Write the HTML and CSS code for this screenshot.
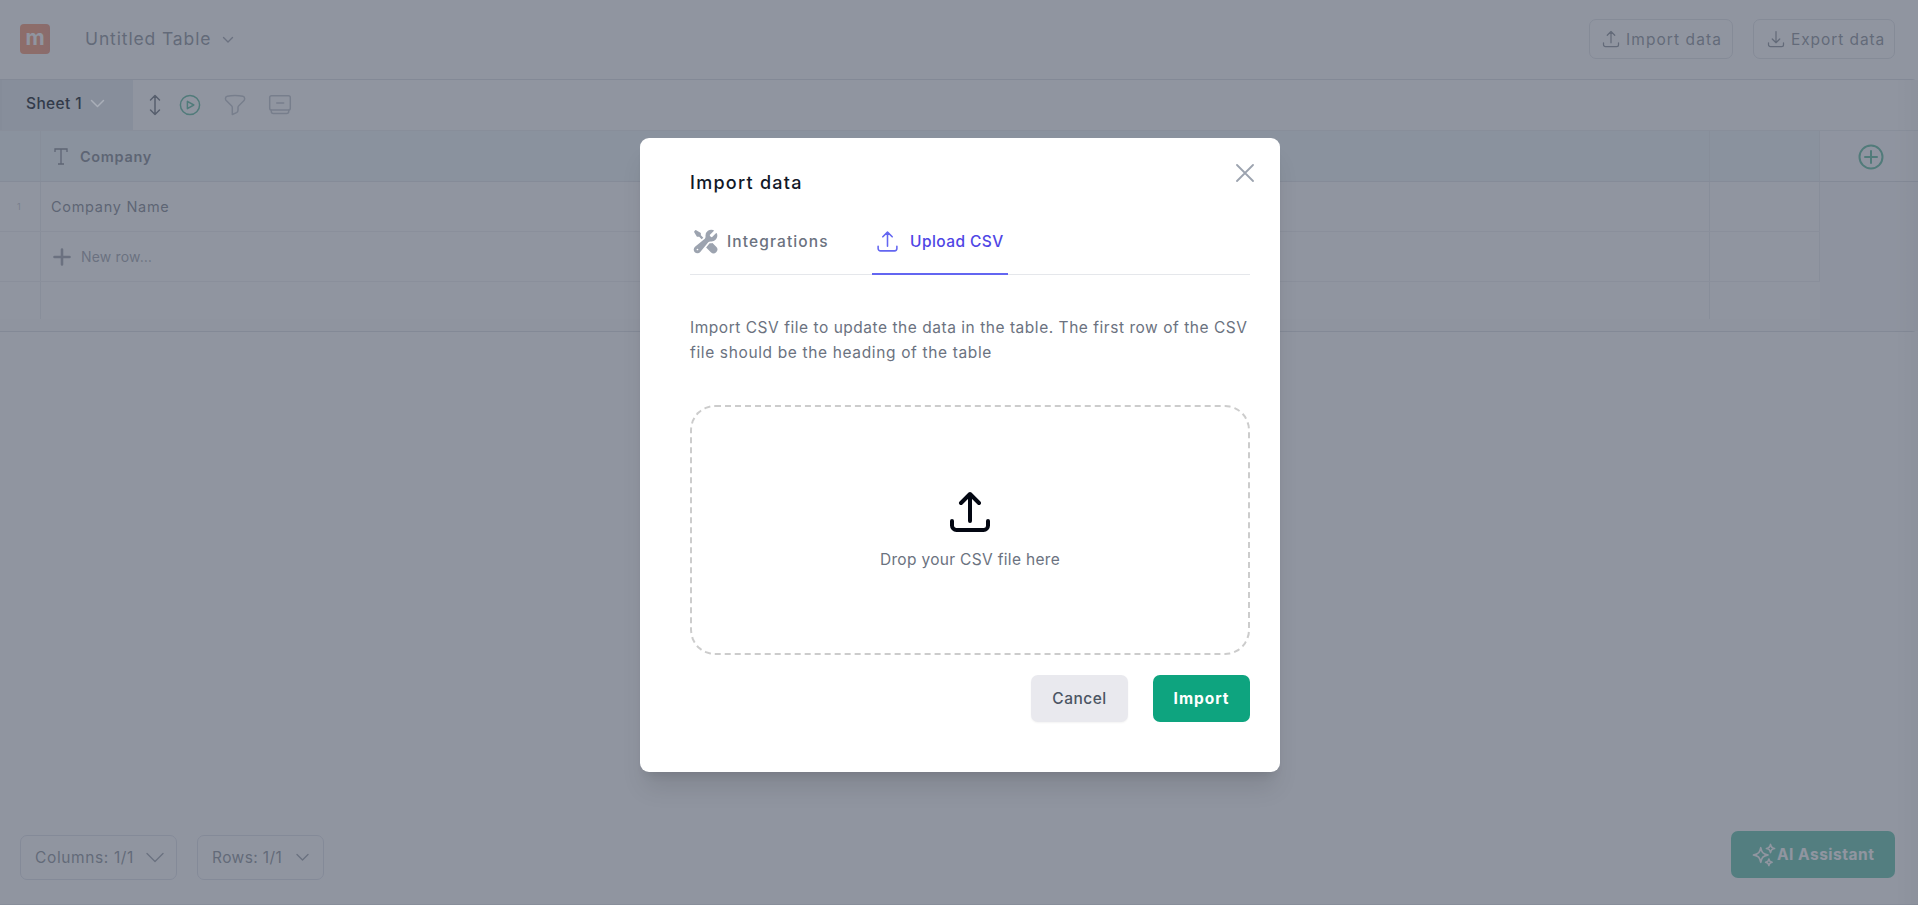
FILE: index.html
```html
<!DOCTYPE html>
<html lang="en">
<head>
<meta charset="utf-8">
<title>Untitled Table</title>
<link rel="stylesheet" href="styles.css">
</head>
<body>
<div class="app">
  <header class="topbar">
    <div class="logo">m</div>
    <div class="doc-name">Untitled Table</div>
    <svg class="doc-chevron" width="12" height="8" viewBox="0 0 12 8"><path d="M1.5 1.5 6 6l4.500-4.500"/></svg>
    <div class="top-actions">
      <button class="outline-btn import-top">
        <svg class="icon" width="20" height="20" viewBox="0 0 24 24"><path d="M3 16.500v2.250A2.250 2.250 0 0 0 5.250 21h13.500A2.250 2.250 0 0 0 21 18.750V16.500m-13.500-9L12 3m0 0 4.500 4.500M12 3v13.500"/></svg>
        <span>Import data</span>
      </button>
      <button class="outline-btn export-top">
        <svg class="icon" width="20" height="20" viewBox="0 0 24 24"><path d="M3 16.500v2.250A2.250 2.250 0 0 0 5.250 21h13.500A2.250 2.250 0 0 0 21 18.750V16.500M16.500 12 12 16.500m0 0L7.500 12m4.500 4.500V3"/></svg>
        <span>Export data</span>
      </button>
    </div>
  </header>

  <main class="panel">
    <div class="toolbar">
      <div class="sheet-tab"><span>Sheet 1</span>
        <svg width="15" height="10" viewBox="0 0 15 10"><path d="M1.500 1.500l6 6 6-6"/></svg>
      </div>
      <div class="tools">
        <svg class="t-sort" width="12" height="22" viewBox="0 0 12 22"><path d="M6 1.500v19M1.500 6 6 1.500 10.500 6M1.500 16 6 20.500l4.500-4.500"/></svg>
        <svg class="t-run" width="22" height="22" viewBox="0 0 22 22"><circle cx="11" cy="11" r="9.600"/><path d="M8.400 7.300v7.400l6.400-3.700z"/></svg>
        <svg class="t-filter" width="22" height="22" viewBox="0 0 22 22"><path d="M11 1.600c2.700 0 5.300.2 7.900.7.900.2 1.700 1 1.700 1.900v.8c0 .7-.3 1.300-.8 1.800l-5 5c-.5.500-.8 1.100-.8 1.800v2.700c0 1-.5 1.800-1.400 2.300L8.300 20.500v-6.900c0-.7-.3-1.300-.8-1.800l-5-5c-.700-.500-1-1.100-1-1.800v-.8c0-.9.800-1.700 1.700-1.900 2.500-.500 5.100-.700 7.800-.700z"/></svg>
        <svg class="t-box" width="24" height="22" viewBox="0 0 24 22"><rect x="1.700" y="1.700" width="20.600" height="14.300" rx="1.800"/><path d="M8.700 9h7M3.300 16.300v1.200c0 1.200.8 2 2 2h13.400c1.200 0 2-.8 2-2v-1.200"/></svg>
      </div>
    </div>

    <div class="sheet">
      <div class="grid">
        <div class="row head">
          <div class="cell num"></div>
          <div class="cell main">
            <svg class="type" width="14" height="17" viewBox="0 0 14 17"><path d="M1 4V1h12v3M7 1v15M4 16h6"/></svg>
            <span class="company">Company</span>
          </div>
          <div class="cell extra"></div>
        </div>
        <div class="row">
          <div class="cell num">1</div>
          <div class="cell main value"><span>Company Name</span></div>
          <div class="cell extra"></div>
        </div>
        <div class="row">
          <div class="cell num"></div>
          <div class="cell main new">
            <svg width="18" height="18" viewBox="0 0 18 18"><path d="M9 1.500v15M1.500 9h15"/></svg>
            <span>New row…</span>
          </div>
          <div class="cell extra"></div>
        </div>
        <div class="row last">
          <div class="cell num"></div>
          <div class="cell main"></div>
          <div class="cell extra"></div>
        </div>
      </div>
      <div class="side">
        <div class="add-col">
          <svg width="26" height="26" viewBox="0 0 26 26"><circle cx="13" cy="13" r="11.500"/><path d="M13 7v12M7 13h12"/></svg>
        </div>
      </div>
    </div>
  </main>

  <footer class="bottombar">
    <button class="outline-btn count cols"><span>Columns: 1/1</span>
      <svg width="18" height="11" viewBox="0 0 18 11"><path d="M1 1.500l8 8 8-8"/></svg></button>
    <button class="outline-btn count rows"><span>Rows: 1/1</span>
      <svg width="13" height="9" viewBox="0 0 13 9"><path d="M1 1.500l5.500 5.500L12 1.500"/></svg></button>
    <button class="ai-btn">
      <svg class="icon" width="26" height="26" viewBox="0 0 24 24"><path d="M9.813 15.904 9 18.750l-.813-2.846a4.500 4.500 0 0 0-3.090-3.090L2.250 12l2.846-.813a4.500 4.500 0 0 0 3.090-3.090L9 5.250l.813 2.846a4.500 4.500 0 0 0 3.090 3.090L15.750 12l-2.846.813a4.500 4.500 0 0 0-3.090 3.090ZM18.259 8.715 18 9.750l-.259-1.035a3.375 3.375 0 0 0-2.455-2.456L14.250 6l1.036-.259a3.375 3.375 0 0 0 2.455-2.456L18 2.250l.259 1.035a3.375 3.375 0 0 0 2.456 2.456L21.750 6l-1.035.259a3.375 3.375 0 0 0-2.456 2.456ZM16.894 20.567 16.500 21.750l-.394-1.183a2.250 2.250 0 0 0-1.423-1.423L13.500 18.750l1.183-.394a2.250 2.250 0 0 0 1.423-1.423l.394-1.183.394 1.183a2.250 2.250 0 0 0 1.423 1.423l1.183.394-1.183.394a2.250 2.250 0 0 0-1.423 1.423Z"/></svg>
      <span>AI Assistant</span>
    </button>
  </footer>
</div>

<div class="overlay">
  <section class="modal">
    <button class="close"><svg width="18" height="18" viewBox="0 0 18 18"><path d="M1 1l16 16M17 1 1 17"/></svg></button>
    <h2>Import data</h2>
    <nav class="tabs">
      <div class="tab">
        <svg class="wrench" width="27" height="27" viewBox="0 0 24 24"><path fill-rule="evenodd" d="M12 6.750a5.250 5.250 0 0 1 6.775-5.025.75.75 0 0 1 .313 1.248l-3.320 3.319c.063.475.276.934.641 1.299.365.365.824.578 1.300.640l3.318-3.319a.75.75 0 0 1 1.248.313 5.250 5.250 0 0 1-5.472 6.756c-1.018-.086-1.870.100-2.309.634L7.344 21.300A3.298 3.298 0 1 1 2.700 16.657l8.684-7.151c.533-.440.720-1.291.634-2.309A5.342 5.342 0 0 1 12 6.750ZM4.117 19.125a.75.75 0 0 1 .75-.75h.008a.75.75 0 0 1 .75.75v.008a.75.75 0 0 1-.75.75h-.008a.75.75 0 0 1-.75-.75v-.008Z"/><path d="m10.076 8.640-2.201-2.200V4.874a.75.75 0 0 0-.364-.643l-3.750-2.250a.75.75 0 0 0-.916.113l-.75.75a.75.75 0 0 0-.113.916l2.250 3.750a.75.75 0 0 0 .643.364h1.564l2.062 2.062 1.575-1.297Z"/><path d="m12.556 17.329 4.183 4.182a3.375 3.375 0 0 0 4.773-4.773l-3.306-3.305a6.803 6.803 0 0 1-1.530.043c-.394-.034-.682-.006-.867.042a.589.589 0 0 0-.167.063l-3.086 3.748Z"/></svg>
        <span class="t-int">Integrations</span>
      </div>
      <div class="tab active">
        <svg class="icon" width="25" height="25" viewBox="0 0 24 24"><path d="M3 16.500v2.250A2.250 2.250 0 0 0 5.250 21h13.500A2.250 2.250 0 0 0 21 18.750V16.500m-13.500-9L12 3m0 0 4.500 4.500M12 3v13.500"/></svg>
        <span class="t-csv">Upload CSV</span>
      </div>
    </nav>
    <p class="intro"><span class="l1">Import CSV file to update the data in the table. The first row of the CSV</span><br><span class="l2">file should be the heading of the table</span></p>
    <div class="drop">
      <svg class="icon" width="48" height="48" viewBox="0 0 24 24"><path d="M3 16.500v2.250A2.250 2.250 0 0 0 5.250 21h13.500A2.250 2.250 0 0 0 21 18.750V16.500m-13.500-9L12 3m0 0 4.500 4.500M12 3v13.500"/></svg>
      <span>Drop your CSV file here</span>
    </div>
    <div class="actions">
      <button class="cancel">Cancel</button>
      <button class="confirm">Import</button>
    </div>
  </section>
</div>
</body>
</html>
```
FILE: styles.css
```css
* { box-sizing: border-box; }
body {
  margin: 0;
  width: 1918px;
  height: 905px;
  overflow: hidden;
  font-family: Inter, Roboto, "Liberation Sans", sans-serif;
  font-size: 15.5px;
  background: #fff;
}
button { margin: 0; padding: 0; border: 0; background: none; font: inherit; color: inherit; }
svg { display: block; flex: none; fill: none; stroke: currentColor; stroke-width: 1.5; stroke-linecap: round; stroke-linejoin: round; }
span { white-space: nowrap; }

.app { display: flex; flex-direction: column; height: 905px; border-bottom: 1px solid #e0e3e8; }
/* Shade of the closed drawer at the right edge */
.app::after { content: ""; position: absolute; top: 80px; right: 0; width: 24px; height: 825px; background: linear-gradient(90deg, transparent, rgba(0, 0, 0, .06)); }

/* Top bar */
.topbar { display: flex; align-items: center; height: 79px; padding: 0 23px 1px 20px; flex: none; }
.logo {
  display: flex; align-items: center; justify-content: center;
  width: 30px; height: 30px; border-radius: 4px;
  background: linear-gradient(90deg, #f3602b 55%, #e35a33);
  color: #fff; font: 700 21px/24px Inter, sans-serif; padding-bottom: 3px;
}
.doc-name { margin-left: 35px; width: 126px; font-size: 17.5px; line-height: 24px; letter-spacing: .87px; color: #4b5563; white-space: nowrap; }
.doc-chevron { margin-left: 11px; margin-top: 1px; color: #6b7280; stroke-width: 1.4; }
.top-actions { display: flex; gap: 20px; margin-left: auto; }
.outline-btn { display: flex; align-items: center; border: 1px solid #d1d5db; border-radius: 7px; color: #4b5563; }
.import-top { width: 144px; height: 40px; padding-left: 11px; gap: 5px; letter-spacing: 1.08px; }
.export-top { width: 142px; height: 40px; padding-left: 12px; gap: 5px; letter-spacing: .92px; }

/* Sheet panel */
.panel { height: 253px; border: 1px solid #c9cdd5; border-left: 0; border-right: 0; border-top-right-radius: 6px; border-bottom-right-radius: 6px; background: #f9fafb; flex: none; }
.toolbar { display: flex; height: 51px; border-bottom: 1px solid #dfe3e7; background: #fff; }
.sheet-tab { display: flex; align-items: center; gap: 8px; width: 133px; padding: 0 0 4px 24px; background: #dbe4ea; border-left: 2px solid #d4dce3; font-weight: 500; letter-spacing: .37px; color: #333b4a; }
.sheet-tab span { position: relative; z-index: 2; width: 56px; }
.sheet-tab svg { position: relative; z-index: 2; margin-top: 2px; color: #a9aeb8; }
.tools { display: flex; align-items: center; padding-left: 16px; }
.t-sort { color: #1f2937; }
.t-run { margin-left: 18px; color: #059669; }
.t-filter { margin-left: 23px; color: #9ca3af; }
.t-box { margin-left: 22px; color: #9ca3af; }

.sheet { display: flex; height: 200px; }
.grid { width: 1820px; }
.row { display: flex; height: 50px; border-bottom: 1px solid #e5e7eb; background: #fff; }
.row.head { height: 51px; border-bottom-color: #d2d7dd; background: #e8f1f5; }
.row.head .cell { border-right-color: #d9e1e7; }
.row.last { height: 37px; border-bottom: 0; }
.cell { display: flex; align-items: center; border-right: 1px solid #dfe3e7; }
.row.last .extra { border-right-color: transparent; }
.num { width: 41px; padding: 0 0 0 17px; font-size: 9px; color: #9ca3af; }
.main { width: 1670px; }
.extra { width: 110px; }
.type { margin-left: 13px; color: #374151; stroke-width: 1.3; stroke-linecap: butt; stroke-linejoin: miter; }
.company { margin-left: 12px; font-size: 14.5px; font-weight: 600; letter-spacing: .68px; color: #374151; }
.value { padding-left: 10px; font-size: 14.5px; letter-spacing: .71px; color: #374151; }
.new { padding-left: 12px; gap: 10px; font-size: 14px; letter-spacing: .17px; color: #6b7280; }
.new svg { stroke-width: 2.6; }
.side { flex: 1; background: #f8f8fa; }
.add-col { display: flex; align-items: center; height: 51px; padding: 0 0 0 38px; border-bottom: 1px solid #c9cdd5; background: #fcfcfd; color: #059669; }
.add-col svg { stroke-width: 2; margin-top: 1px; }

/* Bottom bar */
.bottombar { display: flex; align-items: flex-end; margin-top: auto; padding: 0 23px 24px 20px; }
.count { height: 45px; border-color: #cfd2e0; }
.cols { width: 157px; padding-left: 14px; gap: 12px; letter-spacing: .62px; }
.cols span { width: 99px; }
.rows { width: 127px; padding-left: 14px; margin-left: 20px; gap: 14px; letter-spacing: .4px; }
.rows span { width: 70px; }
.count svg { color: #6b7280; stroke-width: 1.4; }
.ai-btn { display: flex; align-items: center; width: 164px; height: 47px; margin: 0 0 2px auto; padding-left: 20px; border-radius: 7px; background: #0ea47f; color: #fff; font-weight: 700; letter-spacing: .5px; }

/* Modal */
.overlay { position: absolute; top: 0; left: 0; width: 1918px; height: 905px; padding-top: 138px; background: rgba(107, 114, 128, .75); }
.modal {
  position: relative; width: 640px; height: 634px; margin: 0 0 0 640px; padding: 31px 30px 0 50px;
  border-radius: 9px; background: #fff;
  box-shadow: 0 20px 25px -5px rgba(0, 0, 0, .1), 0 8px 10px -6px rgba(0, 0, 0, .1);
}
.close { position: absolute; top: 26px; right: 26px; color: #9ca3af; }
.close svg { stroke-width: 1.8; }
h2 { margin: 0; font-size: 18px; line-height: 28px; font-weight: 500; letter-spacing: 1.26px; color: #111827; }
.tabs { display: flex; gap: 42px; height: 78px; border-bottom: 1px solid #e5e7eb; }
.tab { display: flex; align-items: center; height: 78px; padding: 0 2px; color: #6b7280; font-weight: 500; }
.tab:first-child { width: 140px; }
.wrench { fill: #9ca3af; stroke: none; margin-top: 10px; }
.tab span { margin-top: 10px; }
.t-int { margin-left: 8px; letter-spacing: 1.11px; }
.tab.active { width: 136px; border-bottom: 2px solid #6366f1; color: #4f46e5; padding: 0 0 0 3px; }
.tab.active .icon { color: #6366f1; margin-top: 12px; }
.tab.active span { margin-top: 12px; }
.t-csv { margin-left: 10px; letter-spacing: .43px; }
.intro { margin: 40px 0 0; line-height: 25px; color: #6b7280; }
.l1 { letter-spacing: .53px; }
.l2 { letter-spacing: .64px; }
.drop { display: flex; flex-direction: column; align-items: center; height: 250px; margin-top: 40px; padding-top: 81px; border: 2px dashed #ccc; border-radius: 25px; }
.drop .icon { color: #030712; stroke-width: 2; }
.drop span { margin-top: 14px; line-height: 20px; letter-spacing: .32px; color: #6b7280; }
.actions { display: flex; justify-content: flex-end; gap: 25px; margin-top: 20px; }
.cancel, .confirm { width: 97px; height: 47px; border-radius: 7px; text-align: center; }
.cancel { background: #e9e9ee; color: #4b5563; font-weight: 500; letter-spacing: .5px; box-shadow: 0 1px 2px rgba(0, 0, 0, .05); }
.confirm { background: #0ea47f; color: #fff; font-weight: 700; letter-spacing: .96px; }
```
